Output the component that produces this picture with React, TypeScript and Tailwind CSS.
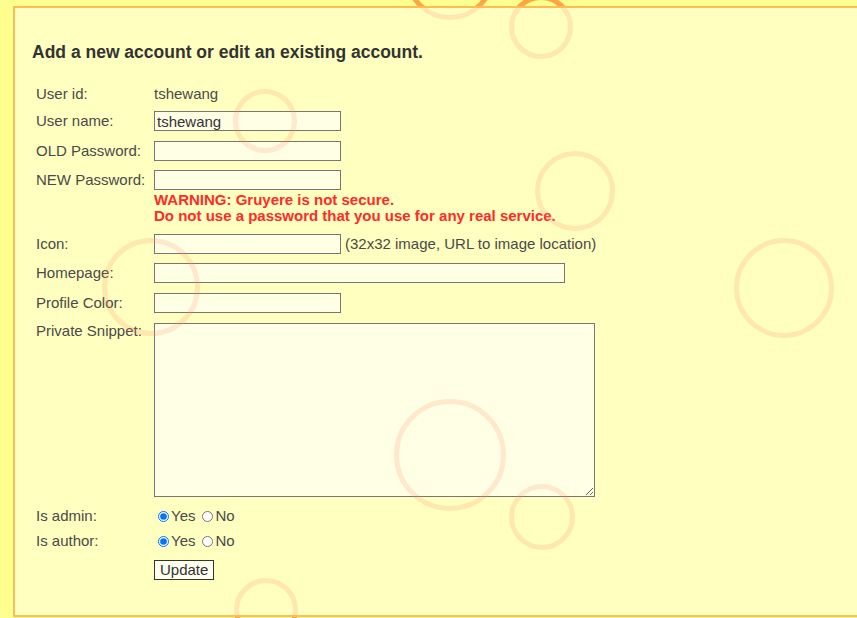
import React from "react";

// page coordinates of the cheese holes: centre x, centre y, outer radius
const HOLES = [
  { x: 450, y: -25, r: 45 },
  { x: 541, y: 27, r: 32 },
  { x: 265, y: 121, r: 32 },
  { x: 575, y: 191, r: 40 },
  { x: 151, y: 287, r: 49 },
  { x: 784, y: 288, r: 50 },
  { x: 450, y: 455, r: 56 },
  { x: 542, y: 517, r: 33 },
  { x: 266, y: 610, r: 32 },
];

function Holes({ dx, dy, className }: { dx: number; dy: number; className: string }) {
  return (
    <>
      {HOLES.map((h, i) => (
        <div
          key={i}
          className={`pointer-events-none absolute rounded-full border-[5px] ${className}`}
          style={{ left: h.x - h.r - dx, top: h.y - h.r - dy, width: h.r * 2, height: h.r * 2 }}
        />
      ))}
    </>
  );
}

function Row({ label, top, children, alignTop }: { label: string; top: string; children: React.ReactNode; alignTop?: boolean }) {
  return (
    <div className={`flex items-start ${top}`}>
      <div className={`w-[118px] shrink-0 text-[#4a4a4a] ${alignTop ? "leading-4" : "leading-5"}`}>{label}</div>
      <div className="flex-1">{children}</div>
    </div>
  );
}

const inputCls =
  "block h-[20px] border border-[#767676] bg-[#fffff0]/80 px-[2px] text-[15px] leading-none text-[#333] outline-none";

function YesNo({ name }: { name: string }) {
  return (
    <div className="flex h-5 items-center text-[#4a4a4a]">
      <input type="radio" name={name} defaultChecked className="m-0 ml-[4px] h-[11px] w-[11px]" />
      <span className="ml-[2px]">Yes</span>
      <input type="radio" name={name} className="m-0 ml-[7px] h-[11px] w-[11px]" />
      <span className="ml-[2px]">No</span>
    </div>
  );
}

export default function App() {
  return (
    <div className="relative h-[618px] overflow-hidden bg-[#ffff90] font-['Liberation_Sans',Arial,sans-serif] text-[15px]">
      <Holes dx={0} dy={0} className="border-[#ffa640]" />

      <div className="relative ml-[13px] mt-[6px] h-[611px] w-[870px] overflow-hidden border-2 border-[#ffbb55] bg-[#ffffc0]">
        <div className="relative pl-[17px] pt-[34px]">
          <h1 className="text-[17.5px] font-bold leading-5 text-[#333]">
            Add a new account or edit an existing account.
          </h1>

          <div className="pl-[4px]">
            <Row label="User id:" top="mt-[22px]">
              <div className="leading-5 text-[#4a4a4a]">tshewang</div>
            </Row>
            <Row label="User name:" top="mt-[7px]">
              <input className={`${inputCls} w-[187px]`} defaultValue="tshewang" />
            </Row>
            <Row label="OLD Password:" top="mt-[10px]">
              <input type="password" className={`${inputCls} w-[187px]`} />
            </Row>
            <Row label="NEW Password:" top="mt-[9px]">
              <input type="password" className={`${inputCls} w-[187px]`} />
              <div className="mt-[2px] font-bold leading-4 text-[#ff2a2a]">
                WARNING: Gruyere is not secure.
                <br />
                Do not use a password that you use for any real service.
              </div>
            </Row>
            <Row label="Icon:" top="mt-[10px]">
              <div className="flex items-center">
                <input className={`${inputCls} w-[187px]`} />
                <span className="ml-[4px] leading-5 text-[#4a4a4a]">(32x32 image, URL to image location)</span>
              </div>
            </Row>
            <Row label="Homepage:" top="mt-[9px]">
              <input className={`${inputCls} w-[411px]`} />
            </Row>
            <Row label="Profile Color:" top="mt-[10px]">
              <input className={`${inputCls} w-[187px]`} />
            </Row>
            <Row label="Private Snippet:" top="mt-[10px]" alignTop>
              <textarea className="block h-[174px] w-[441px] resize border border-[#767676] bg-[#fffff0]/80 p-[2px] text-[15px] outline-none" />
            </Row>
            <Row label="Is admin:" top="mt-[9px]">
              <YesNo name="admin" />
            </Row>
            <Row label="Is author:" top="mt-[5px]">
              <YesNo name="author" />
            </Row>
            <Row label="" top="mt-[8px]">
              <button className="h-[20px] border border-[#333] bg-[#fffff0] px-[5px] text-[15px] leading-none text-[#333]">
                Update
              </button>
            </Row>
          </div>
        </div>

        <Holes dx={15} dy={8} className="border-[#ff8c64]/20" />
      </div>
    </div>
  );
}
